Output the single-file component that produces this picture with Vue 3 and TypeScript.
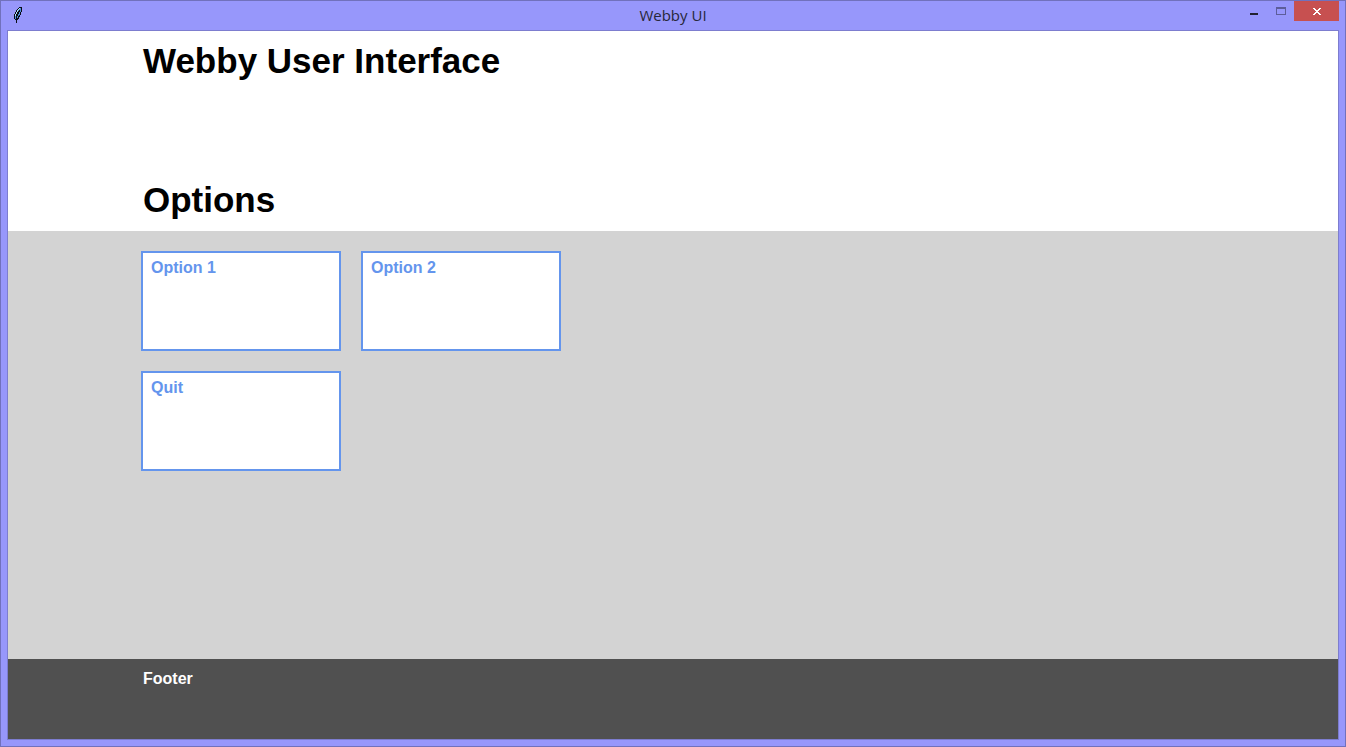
<script setup lang="ts">
interface Option {
  id: string
  label: string
}

const options: Option[] = [
  { id: 'one', label: 'Option 1' },
  { id: 'two', label: 'Option 2' },
  { id: 'quit', label: 'Quit' },
]
</script>

<template>
  <div class="window">
    <header class="titlebar">
      <div class="side">
        <svg class="feather" width="8" height="16" viewBox="0 0 8 16" shape-rendering="crispEdges" aria-hidden="true">
          <path d="M5 0h3v5H7v3H6v2H5v2H4v1H3v3H2v-3H1v-1H0V7h1V5h1V3h1V2h1V1h1z" fill="#0a0d18" />
          <path d="M5 1h2v4H6v3H5v1H4v2H3V9h1V7h1V5h1V3H5v1H4v1H3v2H2v2H1V7h1V5h1V3h1V2h1zM1 9h1v3H1z" fill="#4f8fd8" />
          <path d="M5 1h1v1H5zM4 2h1v1H4zM3 3h1v2H3zM2 5h1v2H2zM1 7h1v2H1z" fill="#b5e2fa" />
        </svg>
      </div>
      <span class="title">Webby UI</span>
      <div class="side controls">
        <button class="control" type="button" aria-label="Minimize">
          <svg width="10" height="10" viewBox="0 0 10 10" shape-rendering="crispEdges"><path d="M1 7h8v2H1z" fill="#222230" /></svg>
        </button>
        <button class="control" type="button" aria-label="Maximize">
          <svg width="10" height="10" viewBox="0 0 10 10" shape-rendering="crispEdges"><path d="M0 1h10v8H0zM1 3v5h8V3z" fill="#5d5d9a" fill-rule="evenodd" /></svg>
        </button>
        <button class="control close" type="button" aria-label="Close">
          <svg width="8" height="7" viewBox="0 0 8 7" shape-rendering="crispEdges"><path d="M0 0h2v1h1v1h2V1h1V0h2v1H7v1H6v1H5v1h1v1h1v1h1v1H6V6H5V5H3v1H2v1H0V6h1V5h1V4h1V3H2V2H1V1H0z" fill="#fff" /></svg>
        </button>
      </div>
    </header>

    <div class="client">
      <section class="banner">
        <h1>Webby User Interface</h1>
        <h2>Options</h2>
      </section>
      <main class="body">
        <nav class="grid">
          <button v-for="option in options" :key="option.id" class="tile" type="button">{{ option.label }}</button>
        </nav>
      </main>
      <footer class="footer">Footer</footer>
    </div>
  </div>
</template>

<style>
body {
  margin: 0;
}
</style>

<style scoped>
.window {
  box-sizing: border-box;
  min-height: 100vh;
  display: flex;
  flex-direction: column;
  padding: 0 6px 6px;
  border: 1px solid #7171bc;
  background: #9797fb;
  font-family: "Liberation Sans", Arial, sans-serif;
}

.titlebar {
  display: flex;
  height: 29px;
}

.side {
  flex: 1;
  display: flex;
  align-items: flex-start;
}

.feather {
  margin: 6px 0 0 7px;
}

.title {
  color: #27273a;
  font: 15px/28px "Open Sans", "Noto Sans", sans-serif;
}

.controls {
  justify-content: flex-end;
}

.control {
  width: 27px;
  height: 20px;
  display: flex;
  align-items: center;
  justify-content: center;
  padding: 0;
  border: 0;
  background: transparent;
}

.close {
  width: 45px;
  background: #c75050;
}

.client {
  flex: 1;
  display: flex;
  flex-direction: column;
  border: 1px solid #7d7dcf;
}

.banner {
  height: 200px;
  box-sizing: border-box;
  display: flex;
  flex-direction: column;
  justify-content: space-between;
  padding: 10px 10% 11px;
  background: #fff;
}

h1,
h2 {
  margin: 0;
  padding-left: 2px;
  color: #000;
  font-size: 35px;
  line-height: 40px;
}

.body {
  flex: 1;
  padding: 20px 10%;
  background: #d3d3d3;
}

.grid {
  display: grid;
  grid-template-columns: repeat(2, 200px);
  grid-auto-rows: 100px;
  gap: 20px;
}

.tile {
  display: flex;
  align-items: flex-start;
  padding: 5px 8px;
  border: 2px solid #6495ed;
  background: #fff;
  color: #6495ed;
  font: bold 16px/20px "Liberation Sans", Arial, sans-serif;
  text-align: left;
}

.footer {
  height: 80px;
  box-sizing: border-box;
  padding: 10px calc(10% + 2px);
  background: #505050;
  color: #fff;
  font-size: 16px;
  font-weight: bold;
  line-height: 20px;
}
</style>
